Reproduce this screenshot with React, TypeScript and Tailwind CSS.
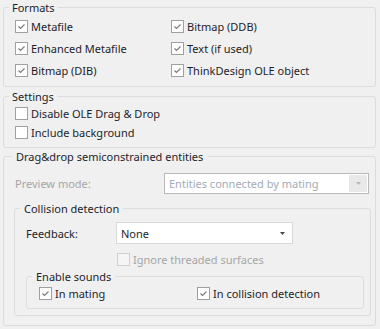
import React from "react";

const FONT = { fontFamily: '"Noto Sans", "Segoe UI", sans-serif' };

function Box({ checked, disabled }: { checked?: boolean; disabled?: boolean }) {
  return (
    <span
      className={
        disabled
          ? "inline-flex w-[13px] h-[13px] shrink-0 items-center justify-center border border-[#cfcfcf] bg-[#f5f5f5]"
          : "inline-flex w-[13px] h-[13px] shrink-0 items-center justify-center border border-[#a0a0a0] bg-white"
      }
    >
      {checked && (
        <svg width="9" height="9" viewBox="0 0 9 9">
          <path d="M1.5 4.5 L3.5 6.5 L7.5 2.5" fill="none" stroke="#7c7c7c" strokeWidth="1.2" />
        </svg>
      )}
    </span>
  );
}

function Item({ label, checked, disabled }: { label: string; checked?: boolean; disabled?: boolean }) {
  return (
    <div className="flex items-center gap-[3px]">
      <Box checked={checked} disabled={disabled} />
      <span className={disabled ? "text-[#a6a6a6]" : "text-[#1e1e2a]"}>{label}</span>
    </div>
  );
}

export default function App() {
  return (
    <div
      className="w-[380px] h-[329px] bg-[#f0f0f0] pl-[3px] pr-[4px] text-[11px] leading-[15px] text-[#1e1e2a]"
      style={FONT}
    >
      <fieldset className="h-[87px] min-w-0 border border-[#dcdcdc] rounded-[3px]">
        <legend className="ml-[5px] px-[3px] leading-[15px]">Formats</legend>
        <div className="grid grid-cols-[156px_1fr] auto-rows-[22px] items-center pl-[11px]">
          <Item label="Metafile" checked />
          <Item label="Bitmap (DDB)" checked />
          <Item label="Enhanced Metafile" checked />
          <Item label="Text (if used)" checked />
          <Item label="Bitmap (DIB)" checked />
          <Item label="ThinkDesign OLE object" checked />
        </div>
      </fieldset>

      <fieldset className="mt-[2px] h-[59px] min-w-0 border border-[#dcdcdc] rounded-[3px]">
        <legend className="ml-[5px] px-[3px] leading-[15px]">Settings</legend>
        <div className="grid auto-rows-[19px] items-center pl-[11px]">
          <Item label="Disable OLE Drag & Drop" />
          <Item label="Include background" />
        </div>
      </fieldset>

      <fieldset className="mt-[1px] h-[177px] min-w-0 border border-[#dcdcdc] rounded-[3px]">
        <legend className="ml-[8px] px-[4px] leading-[15px]">Drag&amp;drop semiconstrained entities</legend>
        <div className="flex items-center pl-[11px] pt-[9px]">
          <span className="w-[149px] text-[#a6a6a6]">Preview mode:</span>
          <div className="flex h-[21px] w-[205px] items-center border border-[#b9b9b9] bg-white p-[1px]">
            <span className="flex-1 pl-[3px] text-[#a3abb6]">Entities connected by mating</span>
            <span className="flex h-full w-[18px] items-center justify-center bg-[#e9e9e9]">
              <svg width="5" height="3" viewBox="0 0 5 3">
                <path d="M0 0 L5 0 L2.5 3 Z" fill="#b8b8b8" />
              </svg>
            </span>
          </div>
        </div>

        <fieldset className="ml-[10px] mr-[4px] mt-[7px] h-[115px] min-w-0 border border-[#dcdcdc] rounded-[3px]">
          <legend className="ml-[5px] px-[4px] leading-[15px]">Collision detection</legend>
          <div className="flex items-center pl-[11px] pt-[6px]">
            <span className="w-[90px]">Feedback:</span>
            <div className="flex h-[22px] w-[177px] items-center border border-[#d9d9d9] bg-white">
              <span className="flex-1 pl-[4px]">None</span>
              <span className="flex w-[20px] items-center justify-center">
                <svg width="5" height="3" viewBox="0 0 5 3">
                  <path d="M0 0 L5 0 L2.5 3 Z" fill="#444444" />
                </svg>
              </span>
            </div>
          </div>
          <div className="flex h-[18px] items-center pl-[102px] mt-[6px]">
            <Item label="Ignore threaded surfaces" disabled />
          </div>
          <fieldset className="ml-[11px] mr-[6px] mt-[1px] h-[40px] min-w-0 border border-[#dcdcdc] rounded-[3px]">
            <legend className="ml-[5px] px-[4px] leading-[15px]">Enable sounds</legend>
            <div className="grid grid-cols-[158px_1fr] h-[18px] items-center pl-[12px]">
              <Item label="In mating" checked />
              <Item label="In collision detection" checked />
            </div>
          </fieldset>
        </fieldset>
      </fieldset>
    </div>
  );
}
